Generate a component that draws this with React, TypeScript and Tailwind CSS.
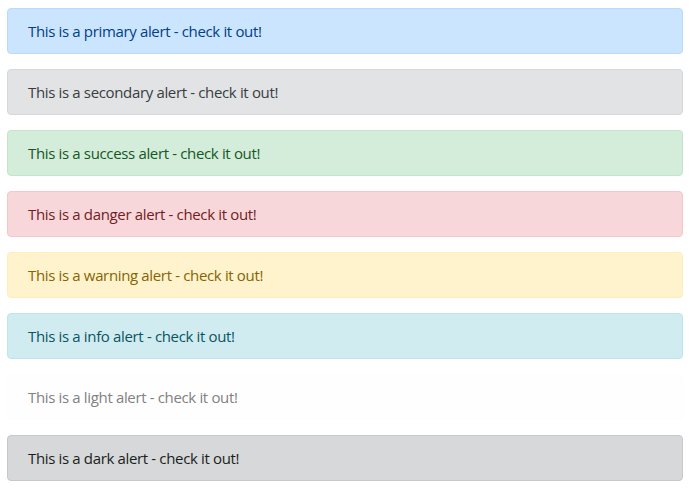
const alerts = [
  { name: 'primary', cls: 'bg-[#cce5ff] border-[#b8daff] text-[#004085]' },
  { name: 'secondary', cls: 'bg-[#e2e3e5] border-[#d6d8db] text-[#383d41]' },
  { name: 'success', cls: 'bg-[#d4edda] border-[#c3e6cb] text-[#155724]' },
  { name: 'danger', cls: 'bg-[#f8d7da] border-[#f5c6cb] text-[#721c24]' },
  { name: 'warning', cls: 'bg-[#fff3cd] border-[#ffeeba] text-[#856404]' },
  { name: 'info', cls: 'bg-[#d1ecf1] border-[#bee5eb] text-[#0c5460]' },
  { name: 'light', cls: 'bg-[#fefefe] border-[#fdfdfe] text-[#818182]' },
  { name: 'dark', cls: 'bg-[#d6d8d9] border-[#c6c8ca] text-[#1b1e21]' },
]

export default function App() {
  return (
    <div className="bg-white min-h-screen px-[7px] pt-[8px] font-['Segoe_UI','Open_Sans',sans-serif] text-[15px] tracking-[-0.35px]">
      {alerts.map((a) => (
        <div
          key={a.name}
          role="alert"
          className={`border rounded-[4px] px-[20px] py-[12px] leading-[20px] mb-[15px] ${a.cls}`}
        >
          This is a {a.name} alert - check it out!
        </div>
      ))}
    </div>
  )
}
